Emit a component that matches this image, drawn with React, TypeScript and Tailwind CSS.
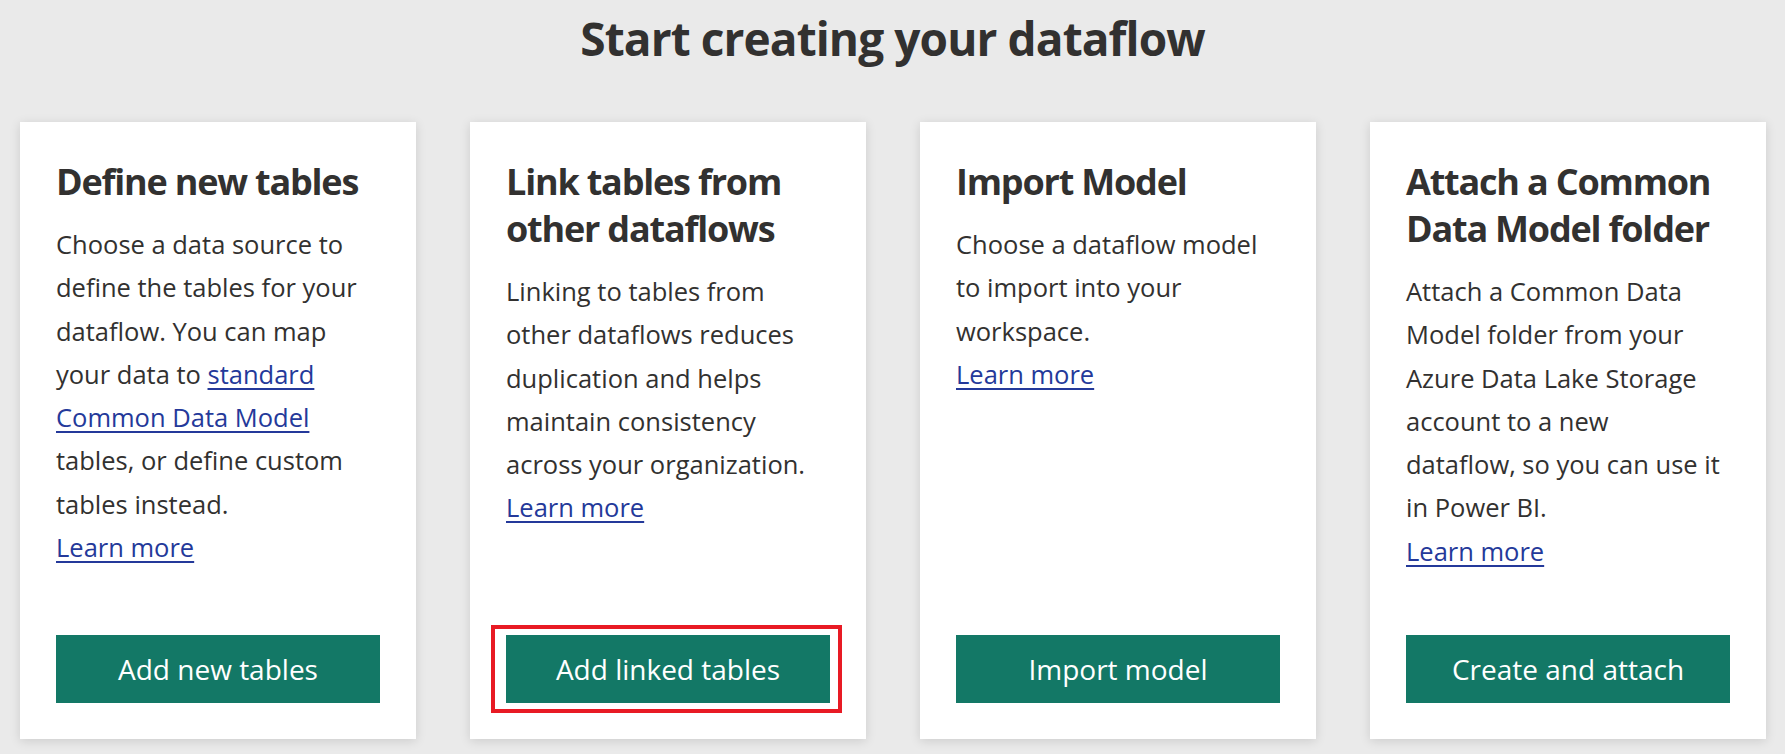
import React from "react";

type Seg = { t: string; link?: boolean };
type Card = {
  title: string[];
  body: Seg[][];
  button: string;
  highlight?: boolean;
};

const cards: Card[] = [
  {
    title: ["Define new tables"],
    body: [
      [{ t: "Choose a data source to" }],
      [{ t: "define the tables for your" }],
      [{ t: "dataflow. You can map" }],
      [{ t: "your data to " }, { t: "standard", link: true }],
      [{ t: "Common Data Model", link: true }],
      [{ t: "tables, or define custom" }],
      [{ t: "tables instead." }],
      [{ t: "Learn more", link: true }],
    ],
    button: "Add new tables",
  },
  {
    title: ["Link tables from", "other dataflows"],
    body: [
      [{ t: "Linking to tables from" }],
      [{ t: "other dataflows reduces" }],
      [{ t: "duplication and helps" }],
      [{ t: "maintain consistency" }],
      [{ t: "across your organization." }],
      [{ t: "Learn more", link: true }],
    ],
    button: "Add linked tables",
    highlight: true,
  },
  {
    title: ["Import Model"],
    body: [
      [{ t: "Choose a dataflow model" }],
      [{ t: "to import into your" }],
      [{ t: "workspace." }],
      [{ t: "Learn more", link: true }],
    ],
    button: "Import model",
  },
  {
    title: ["Attach a Common", "Data Model folder"],
    body: [
      [{ t: "Attach a Common Data" }],
      [{ t: "Model folder from your" }],
      [{ t: "Azure Data Lake Storage" }],
      [{ t: "account to a new" }],
      [{ t: "dataflow, so you can use it" }],
      [{ t: "in Power BI." }],
      [{ t: "Learn more", link: true }],
    ],
    button: "Create and attach",
  },
];

export default function App() {
  return (
    <div className="min-h-[754px] w-full bg-[#eaeaea] font-['Open_Sans','Noto_Sans',sans-serif] text-[#323130]">
      <h1 className="pt-[7px] text-center text-[46px] font-bold leading-[63px] tracking-[-0.9px] text-[#323130]">
        Start creating your dataflow
      </h1>
      <div className="mt-[52px] flex gap-[54px] pl-5">
        {cards.map((c, i) => (
          <div
            key={i}
            className="flex h-[617px] w-[396px] shrink-0 flex-col bg-white p-9 shadow-[0_2px_10px_rgba(0,0,0,0.13)]"
          >
            <h2 className="whitespace-nowrap text-[36px] font-bold leading-[47px] tracking-[-1.2px]">
              {c.title.map((l, j) => (
                <div key={j}>{l}</div>
              ))}
            </h2>
            <div className="mt-[18px] whitespace-nowrap text-[25.5px] leading-[43.3px]">
              {c.body.map((line, j) => (
                <div key={j}>
                  {line.map((s, k) =>
                    s.link ? (
                      <a
                        key={k}
                        href="#"
                        className="text-[#24399a] underline decoration-[1.5px] underline-offset-[4px]"
                      >
                        {s.t}
                      </a>
                    ) : (
                      <span key={k}>{s.t}</span>
                    )
                  )}
                </div>
              ))}
            </div>
            <div className="relative mt-auto">
              <button className="flex h-[68px] w-full items-center justify-center bg-[#137866] text-[28px] text-white">
                {c.button}
              </button>
              {c.highlight && (
                <div className="pointer-events-none absolute -bottom-[10px] -left-[15px] -right-[12px] -top-[10px] border-4 border-[#e81a24]" />
              )}
            </div>
          </div>
        ))}
      </div>
    </div>
  );
}
